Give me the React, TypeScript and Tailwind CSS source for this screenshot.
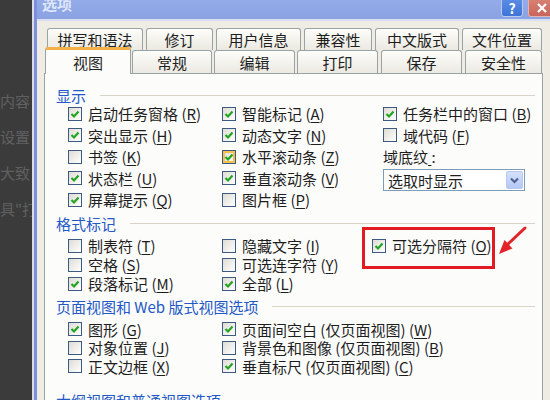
import React from "react";

const font = { fontFamily: '"Noto Sans CJK SC", "Liberation Sans", sans-serif' };

function Box({ checked, hot }: { checked?: boolean; hot?: boolean }) {
  return (
    <span
      className={
        "relative flex h-[14px] w-[14px] shrink-0 items-center justify-center border border-[#3d5a82] bg-linear-to-br from-[#dedcd3] to-white " +
        (hot ? "shadow-[inset_0_0_0_2px_#f6c04a]" : "")
      }
    >
      {checked ? (
        <svg width="10" height="10" viewBox="0 0 10 10">
          <path d="M1.5 5 L4 7.5 L8.5 2.5" fill="none" stroke="#23a523" strokeWidth="2.2" />
        </svg>
      ) : null}
    </span>
  );
}

function Item({ label, k, checked, hot }: { label: string; k: string; checked?: boolean; hot?: boolean }) {
  return (
    <div className="flex h-full items-center gap-[6px] overflow-hidden whitespace-nowrap leading-none">
      <Box checked={checked} hot={hot} />
      <span className="leading-none">
        {label} (<span className="underline underline-offset-2">{k}</span>)
      </span>
    </div>
  );
}

function Header({ text }: { text: React.ReactNode }) {
  return (
    <div className="flex h-[16px] items-center leading-none text-[#2358c6]">
      <span className="whitespace-nowrap leading-none">{text}</span>
      <div className="ml-[14px] h-px flex-1 bg-[#d8d5c8]" />
    </div>
  );
}

const backTabs = [
  { t: "拼写和语法", c: "w-[96px]" },
  { t: "修订", c: "w-[67px]" },
  { t: "用户信息", c: "w-[85px]" },
  { t: "兼容性", c: "w-[68px]" },
  { t: "中文版式", c: "w-[84px]" },
  { t: "文件位置", c: "w-[80px]" },
];

const frontTabs = [
  { t: "常规", c: "ml-[1px] w-[80px]" },
  { t: "编辑", c: "ml-[2px] w-[81px]" },
  { t: "打印", c: "ml-[2px] w-[81px]" },
  { t: "保存", c: "ml-[3px] w-[81px]" },
  { t: "安全性", c: "ml-[3px] w-[77px]" },
];

const tabCls =
  "flex items-center justify-center rounded-t-[3px] border border-b-0 border-[#9aa3a4] bg-linear-to-b from-[#fdfdfb] to-[#ebe9e1] text-[15px] leading-none text-[#1e1e1e]";

export default function App() {
  return (
    <div className="relative flex h-[400px] w-[550px] overflow-hidden bg-[#3b3b3b]" style={font}>
      <div className="w-[32px] shrink-0 overflow-hidden whitespace-nowrap pt-[83px] text-[15px] leading-[36px] text-[#606060]">
        <div>内容</div>
        <div>设置</div>
        <div>大致</div>
        <div>具"打</div>
      </div>
      <div className="w-[2px] shrink-0 bg-[#d9dbe6]" />
      <div className="flex min-w-0 flex-1 flex-col overflow-hidden border-l-[3px] border-[#7e8fdb] bg-[#eeece3]">
        <div className="flex h-[21px] shrink-0 items-start overflow-hidden border-b-2 border-[#d9def0] bg-linear-to-b from-[#93abe8] to-[#8aa2e2]">
          <span className="ml-[5px] mt-[-7px] text-[15px] font-bold text-[#dfe6fa]">选项</span>
          <div className="flex-1" />
          <div className="mt-[-2px] flex h-[19px] w-[22px] items-center justify-center rounded-[3px] border border-[#b9c9f0] bg-linear-to-b from-[#5b8de6] to-[#3f74d8] text-[14px] font-bold leading-none text-white">
            ?
          </div>
          <div className="ml-[5px] mr-[-6px] mt-[-2px] flex h-[19px] w-[28px] items-center justify-center rounded-[3px] border border-[#e6b4ad] bg-linear-to-b from-[#d98176] to-[#c9655a] text-white">
            <svg width="12" height="12" viewBox="0 0 12 12">
              <path d="M2 2 L10 10 M10 2 L2 10" stroke="white" strokeWidth="2.2" />
            </svg>
          </div>
        </div>

        <div className="flex flex-1 flex-col pt-[7px]">
          <div className="ml-[10px] flex h-[22px] gap-[3px]">
            {backTabs.map((b) => (
              <div key={b.t} className={tabCls + " " + b.c}>
                {b.t}
              </div>
            ))}
          </div>
          <div className="relative z-10 ml-[8px] flex h-[23px] items-end">
            <div className="mb-[-1px] flex h-[27px] w-[86px] items-center justify-center rounded-t-[3px] border border-b-0 border-t-[3px] border-[#9aa3a4] border-t-[#f2b048] bg-[#fcfcfb] text-[15px] leading-none text-[#1e1e1e]">
              视图
            </div>
            {frontTabs.map((f) => (
              <div key={f.t} className={tabCls + " h-[23px] " + f.c}>
                {f.t}
              </div>
            ))}
          </div>

          <div className="ml-[7px] w-[499px] flex-1 border border-[#9aa3a4] bg-[#fcfcfb] pl-[11px] pr-[7px] text-[15px] leading-none text-[#1e1e1e]">
            <div className="mt-[13px]">
              <Header text="显示" />
            </div>
            <div className="grid auto-rows-[21.5px] grid-cols-[154px_161px_1fr] items-center pl-[12px]">
              <Item label="启动任务窗格" k="R" checked />
              <Item label="智能标记" k="A" checked />
              <Item label="任务栏中的窗口" k="B" checked />
              <Item label="突出显示" k="H" checked />
              <Item label="动态文字" k="N" checked />
              <Item label="域代码" k="F" />
              <Item label="书签" k="K" />
              <Item label="水平滚动条" k="Z" checked hot />
              <div className="leading-none">
                域底纹<span className="underline underline-offset-2">&nbsp;</span>:
              </div>
              <Item label="状态栏" k="U" checked />
              <Item label="垂直滚动条" k="V" checked />
              <div className="row-span-2 self-start pt-[1.5px]">
                <div className="flex h-[22px] w-[142px] items-center border border-[#7f9db9] bg-white pl-[4px] pr-[1px]">
                  <span className="flex-1 leading-none">选取时显示</span>
                  <span className="flex h-[18px] w-[17px] items-center justify-center rounded-[2px] border border-[#b6c8f3] bg-linear-to-b from-[#d4e0fb] to-[#b4c7f4]">
                    <svg width="9" height="7" viewBox="0 0 9 7">
                      <path d="M1 1.5 L4.5 5 L8 1.5" fill="none" stroke="#4c5f8c" strokeWidth="2" />
                    </svg>
                  </span>
                </div>
              </div>
              <Item label="屏幕提示" k="Q" checked />
              <Item label="图片框" k="P" />
            </div>

            <div className="mt-[4.5px]">
              <Header text="格式标记" />
            </div>
            <div className="mt-[5px] grid auto-rows-[19px] grid-cols-[154px_150px_1fr] items-center pl-[12px]">
              <Item label="制表符" k="T" />
              <Item label="隐藏文字" k="I" />
              <Item label="可选分隔符" k="O" checked />
              <Item label="空格" k="S" />
              <Item label="可选连字符" k="Y" />
              <div />
              <Item label="段落标记" k="M" checked />
              <Item label="全部" k="L" checked />
            </div>

            <div className="mt-[5px]">
              <Header text="页面视图和 Web 版式视图选项" />
            </div>
            <div className="mt-[6px] grid auto-rows-[18.5px] grid-cols-[154px_1fr] items-center pl-[12px]">
              <Item label="图形" k="G" checked />
              <Item label="页面间空白 (仅页面视图)" k="W" checked />
              <Item label="对象位置" k="J" />
              <Item label="背景色和图像 (仅页面视图)" k="B" />
              <Item label="正文边框" k="X" />
              <Item label="垂直标尺 (仅页面视图)" k="C" checked />
            </div>

            <div className="mt-[16.5px]">
              <Header text="大纲视图和普通视图选项" />
            </div>
          </div>
        </div>
      </div>

      <div className="pointer-events-none absolute left-[362px] top-[227px] h-[42px] w-[133px] border-[3px] border-[#e01b22]" />
      <svg className="pointer-events-none absolute left-0 top-0" width="550" height="400" viewBox="0 0 550 400">
        <path d="M525 228 L507 245" stroke="#e3232a" strokeWidth="3" strokeLinecap="round" />
        <path d="M499 254 L504.5 240 L512.5 248.5 Z" fill="#e3232a" />
      </svg>
    </div>
  );
}
